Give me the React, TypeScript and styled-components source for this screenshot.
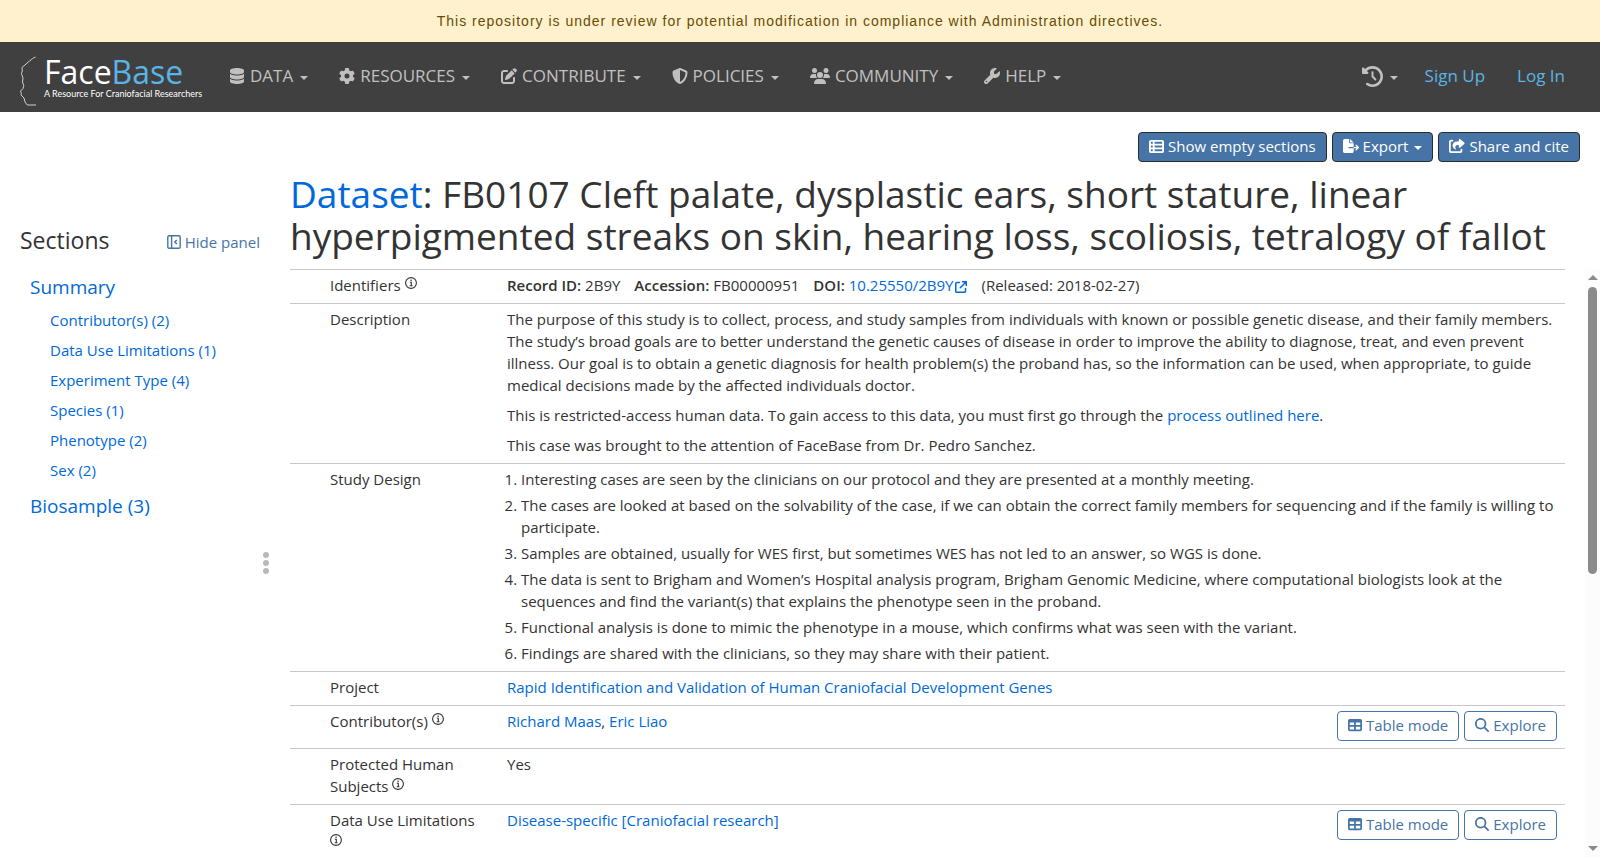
import React from "react";
import styled, { createGlobalStyle } from "styled-components";
import {
  FaDatabase,
  FaGear,
  FaPenToSquare,
  FaShieldHalved,
  FaUsers,
  FaWrench,
  FaClockRotateLeft,
  FaTableList,
  FaFileExport,
  FaShareFromSquare,
  FaTable,
  FaMagnifyingGlass,
  FaArrowUpRightFromSquare,
} from "react-icons/fa6";

const colors = {
  text: "#333333",
  link: "#0069d9",
  primary: "#4674a7",
  navBg: "#404040",
  navText: "#c0c0c0",
  navLink: "#5bb4e5",
  border: "#c8c8c8",
};

const GlobalStyle = createGlobalStyle`
  *, *::before, *::after { box-sizing: border-box; }
  body {
    margin: 0;
    background: #fff;
    color: ${colors.text};
    font: 15px/22px "Open Sans", "Noto Sans", sans-serif;
  }
  button { font: inherit; cursor: pointer; }
  a { color: ${colors.link}; text-decoration: none; }
`;

const Page = styled.div`
  display: flex;
  flex-direction: column;
  height: 100vh;
`;

const Banner = styled.div`
  padding: 10px 16px;
  background: #fff1cd;
  color: #664d03;
  font: 14px/22px "Liberation Sans", Arial, sans-serif;
  letter-spacing: 1px;
  text-align: center;
`;

const Navbar = styled.header`
  display: flex;
  align-items: center;
  height: 70px;
  padding: 0 35px 0 20px;
  background: ${colors.navBg};
`;

const Logo = styled.a`
  display: flex;
  gap: 8px;
  width: 180px;
  margin-right: 29px;
  padding-top: 8px;
  color: #fff;
`;

const Profile = styled.svg`
  flex: none;
`;

const Wordmark = styled.span`
  display: flex;
  flex-direction: column;
  font-size: 32px;
  line-height: 32px;
  white-space: nowrap;
`;

const Accent = styled.span`
  color: ${colors.navLink};
`;

const Tagline = styled.span`
  font: 9px/12px Lato, sans-serif;
`;

const NavMenu = styled.nav`
  display: flex;
  flex: 1;
  gap: 31px;
  padding-bottom: 2px;
`;

const NavItem = styled.button`
  display: flex;
  align-items: center;
  gap: 5px;
  padding: 0;
  border: 0;
  background: none;
  color: ${colors.navText};
  font-size: 17px;
  line-height: 24px;
  white-space: nowrap;
`;

const NavRight = styled.div`
  display: flex;
  align-items: center;
  gap: 32px;
  padding-bottom: 2px;
`;

const NavLink = styled.a`
  color: ${colors.navLink};
  font-size: 17px;
  line-height: 24px;
`;

const HistoryButton = styled(NavItem)`
  margin-right: -5px;
`;

const Caret = styled.span`
  width: 0;
  margin: 4px 0 0 2px;
  border: 4px solid transparent;
  border-top-color: currentColor;
  border-bottom: 0;
`;

const Toolbar = styled.div`
  display: flex;
  justify-content: flex-end;
  gap: 5px;
  padding: 20px 20px 11px;
`;

const Button = styled.button<{ $outline?: boolean }>`
  display: inline-flex;
  align-items: center;
  gap: 4px;
  height: 30px;
  padding: 0 10px 2px;
  border: 1px solid ${(p) => (p.$outline ? colors.primary : "#2c2c2c")};
  border-radius: 4px;
  background: ${(p) => (p.$outline ? "#fff" : colors.primary)};
  color: ${(p) => (p.$outline ? colors.primary : "#fff")};
  white-space: nowrap;
`;

const Record = styled.main`
  display: grid;
  grid-template-columns: 290px minmax(0, 1fr);
  grid-template-rows: auto minmax(0, 1fr);
  row-gap: 12px;
  flex: 1;
  min-height: 0;
`;

const SectionsHead = styled.div`
  display: flex;
  align-items: baseline;
  align-self: end;
  justify-content: space-between;
  padding: 0 30px 2px 20px;
`;

const SectionsTitle = styled.h2`
  margin: 0;
  font-size: 23px;
  font-weight: 400;
  line-height: 30px;
`;

const HideButton = styled.button`
  display: flex;
  align-items: center;
  gap: 4px;
  padding: 0;
  border: 0;
  background: none;
  color: ${colors.primary};
`;

const Title = styled.h1`
  margin: 0;
  padding-right: 35px;
  font-size: 37px;
  font-weight: 400;
  line-height: 42px;
`;

const Sidebar = styled.aside`
  display: flex;
  align-items: stretch;
  justify-content: space-between;
  padding: 0 21px 0 30px;
`;

const Toc = styled.nav`
  display: flex;
  flex-direction: column;
  align-items: flex-start;
  padding-top: 6px;
`;

const TocHeading = styled.a`
  font-size: 19px;
  line-height: 24px;
`;

const TocList = styled.ul`
  margin: 6px 0 9px;
  padding: 0 0 0 20px;
  list-style: none;
  line-height: 30px;
`;

const Resizer = styled.div`
  display: flex;
  flex-direction: column;
  justify-content: center;
  gap: 2px;
`;

const Dot = styled.span`
  width: 6px;
  height: 6px;
  border-radius: 50%;
  background: #b8b8b8;
`;

const Content = styled.div`
  display: flex;
  min-height: 0;
`;

const ScrollArea = styled.div`
  flex: 1;
  min-width: 0;
  padding-right: 20px;
  overflow-y: auto;
  scrollbar-width: none;
`;

const Rail = styled.div`
  display: flex;
  flex-direction: column;
  align-items: center;
  width: 15px;
  padding: 6px 0;
  background: #fcfcfc;
`;

const Track = styled.div`
  flex: 1;
  margin: 7px 0;
`;

const Thumb = styled.div`
  width: 9px;
  height: 52%;
  border-radius: 5px;
  background: #8b8b8b;
`;

const Arrow = styled.span<{ $down?: boolean }>`
  border: 5px solid transparent;
  ${(p) =>
    p.$down
      ? "border-top-color: #8b8b8b; border-bottom: 0;"
      : "border-bottom-color: #8b8b8b; border-top: 0;"}
`;

const RecordTable = styled.table`
  width: 100%;
  border-spacing: 0;
  table-layout: fixed;
`;

const Label = styled.th`
  width: 217px;
  padding: 4px 20px 7px 40px;
  border-top: 1px solid ${colors.border};
  font-weight: 400;
  text-align: left;
  vertical-align: top;
`;

const Value = styled.td`
  padding: 4px 8px 7px 0;
  border-top: 1px solid ${colors.border};
  vertical-align: top;
`;

const ValueRow = styled.div`
  display: flex;
  justify-content: space-between;
`;

const Actions = styled.div`
  display: flex;
  gap: 5px;
  padding-top: 1px;
`;

const Identifiers = styled.div`
  display: flex;
  flex-wrap: wrap;
  column-gap: 14px;
`;

const Strong = styled.strong`
  font-weight: 600;
`;

const Text = styled.p`
  margin: 0 0 8px;
  &:last-child {
    margin-bottom: 0;
  }
`;

const Steps = styled.ol`
  display: flex;
  flex-direction: column;
  gap: 4px;
  margin: 0;
  padding: 0 0 0 14px;
`;

const Info = styled.svg`
  vertical-align: 2px;
`;

const ExternalIcon = styled(FaArrowUpRightFromSquare)`
  margin-left: 2px;
  vertical-align: -2px;
`;

const InfoIcon = () => (
  <Info width="12" height="12" viewBox="0 0 12 12" fill="none" stroke="currentColor" role="img" aria-label="More information">
    <circle cx="6" cy="6" r="5.4" strokeWidth="1.1" />
    <path d="M4.8 5.2H6.3V8.7M4.7 8.8H7.5" strokeWidth="1.1" />
    <circle cx="6.1" cy="3.3" r="0.8" fill="currentColor" stroke="none" />
  </Info>
);

const PanelIcon = () => (
  <svg width="14" height="14" viewBox="0 0 14 14" fill="none" stroke="currentColor" strokeWidth="1.4" aria-hidden="true">
    <rect x="0.8" y="0.8" width="12.4" height="12.4" rx="1.2" />
    <path d="M4.6 1V13" />
    <path d="M9.8 4.9L7.8 7L9.8 9.1" />
  </svg>
);

const menus = [
  { label: "DATA", Icon: FaDatabase, size: 16 },
  { label: "RESOURCES", Icon: FaGear, size: 16 },
  { label: "CONTRIBUTE", Icon: FaPenToSquare, size: 16 },
  { label: "POLICIES", Icon: FaShieldHalved, size: 16 },
  { label: "COMMUNITY", Icon: FaUsers, size: 20 },
  { label: "HELP", Icon: FaWrench, size: 16 },
];

const summaryItems = [
  "Contributor(s) (2)",
  "Data Use Limitations (1)",
  "Experiment Type (4)",
  "Species (1)",
  "Phenotype (2)",
  "Sex (2)",
];

const steps = [
  "Interesting cases are seen by the clinicians on our protocol and they are presented at a monthly meeting.",
  "The cases are looked at based on the solvability of the case, if we can obtain the correct family members for sequencing and if the family is willing to participate.",
  "Samples are obtained, usually for WES first, but sometimes WES has not led to an answer, so WGS is done.",
  "The data is sent to Brigham and Women’s Hospital analysis program, Brigham Genomic Medicine, where computational biologists look at the sequences and find the variant(s) that explains the phenotype seen in the proband.",
  "Functional analysis is done to mimic the phenotype in a mouse, which confirms what was seen with the variant.",
  "Findings are shared with the clinicians, so they may share with their patient.",
];

const RowActions = () => (
  <Actions>
    <Button $outline>
      <FaTable size={14} />
      Table mode
    </Button>
    <Button $outline>
      <FaMagnifyingGlass size={14} />
      Explore
    </Button>
  </Actions>
);

const Row = ({ label, info, children }: { label: string; info?: boolean; children: React.ReactNode }) => (
  <tr>
    <Label scope="row">
      {label}
      {info && (
        <>
          {" "}
          <InfoIcon />
        </>
      )}
    </Label>
    <Value>{children}</Value>
  </tr>
);

export default function App() {
  return (
    <Page>
      <GlobalStyle />
      <Banner>
        This repository is under review for potential modification in compliance with Administration directives.
      </Banner>
      <Navbar>
        <Logo href="#home">
          <Profile width="16" height="50" viewBox="0 0 16 50" fill="none" stroke="#d0d0d0" aria-hidden="true">
            <path d="M15.5 1C13 2 12 3 9.5 5L2 11.5L2.3 15L1.4 17.5L3 22L2.5 26L3.8 29.5L3 32.5L.6 35L1.3 37.5L1 39L4 42L5 46L7.3 49H16" />
          </Profile>
          <Wordmark>
            <span>
              Face<Accent>Base</Accent>
            </span>
            <Tagline>A Resource For Craniofacial Researchers</Tagline>
          </Wordmark>
        </Logo>
        <NavMenu aria-label="Main">
          {menus.map(({ label, Icon, size }) => (
            <NavItem key={label}>
              <Icon size={size} />
              {label}
              <Caret />
            </NavItem>
          ))}
        </NavMenu>
        <NavRight>
          <HistoryButton aria-label="History">
            <FaClockRotateLeft size={21} />
            <Caret />
          </HistoryButton>
          <NavLink href="#signup">Sign Up</NavLink>
          <NavLink href="#login">Log In</NavLink>
        </NavRight>
      </Navbar>

      <Toolbar>
        <Button>
          <FaTableList size={15} />
          Show empty sections
        </Button>
        <Button>
          <FaFileExport size={16} />
          Export
          <Caret />
        </Button>
        <Button>
          <FaShareFromSquare size={16} />
          Share and cite
        </Button>
      </Toolbar>

      <Record>
        <SectionsHead>
          <SectionsTitle>Sections</SectionsTitle>
          <HideButton>
            <PanelIcon />
            Hide panel
          </HideButton>
        </SectionsHead>
        <Title>
          <a href="#dataset">Dataset</a>: FB0107 Cleft palate, dysplastic ears, short stature, linear hyperpigmented
          streaks on skin, hearing loss, scoliosis, tetralogy of fallot
        </Title>

        <Sidebar>
          <Toc aria-label="Sections">
            <TocHeading href="#summary">Summary</TocHeading>
            <TocList>
              {summaryItems.map((item) => (
                <li key={item}>
                  <a href="#summary">{item}</a>
                </li>
              ))}
            </TocList>
            <TocHeading href="#biosample">Biosample (3)</TocHeading>
          </Toc>
          <Resizer>
            <Dot />
            <Dot />
            <Dot />
          </Resizer>
        </Sidebar>

        <Content>
          <ScrollArea>
            <RecordTable>
              <tbody>
                <Row label="Identifiers" info>
                  <Identifiers>
                    <span>
                      <Strong>Record ID:</Strong> 2B9Y
                    </span>
                    <span>
                      <Strong>Accession:</Strong> FB00000951
                    </span>
                    <span>
                      <Strong>DOI:</Strong>{" "}
                      <a href="#doi">
                        10.25550/2B9Y
                        <ExternalIcon size={12} />
                      </a>
                    </span>
                    <span>(Released: 2018-02-27)</span>
                  </Identifiers>
                </Row>
                <Row label="Description">
                  <Text>
                    The purpose of this study is to collect, process, and study samples from individuals with known or
                    possible genetic disease, and their family members. The study’s broad goals are to better
                    understand the genetic causes of disease in order to improve the ability to diagnose, treat, and
                    even prevent illness. Our goal is to obtain a genetic diagnosis for health problem(s) the proband
                    has, so the information can be used, when appropriate, to guide medical decisions made by the
                    affected individuals doctor.
                  </Text>
                  <Text>
                    This is restricted-access human data. To gain access to this data, you must first go through the{" "}
                    <a href="#process">process outlined here</a>.
                  </Text>
                  <Text>This case was brought to the attention of FaceBase from Dr. Pedro Sanchez.</Text>
                </Row>
                <Row label="Study Design">
                  <Steps>
                    {steps.map((step) => (
                      <li key={step}>{step}</li>
                    ))}
                  </Steps>
                </Row>
                <Row label="Project">
                  <a href="#project">Rapid Identification and Validation of Human Craniofacial Development Genes</a>
                </Row>
                <Row label="Contributor(s)" info>
                  <ValueRow>
                    <span>
                      <a href="#maas">Richard Maas</a>, <a href="#liao">Eric Liao</a>
                    </span>
                    <RowActions />
                  </ValueRow>
                </Row>
                <Row label="Protected Human Subjects" info>
                  Yes
                </Row>
                <Row label="Data Use Limitations" info>
                  <ValueRow>
                    <a href="#limitations">Disease-specific [Craniofacial research]</a>
                    <RowActions />
                  </ValueRow>
                </Row>
              </tbody>
            </RecordTable>
          </ScrollArea>
          <Rail aria-hidden="true">
            <Arrow />
            <Track>
              <Thumb />
            </Track>
            <Arrow $down />
          </Rail>
        </Content>
      </Record>
    </Page>
  );
}
